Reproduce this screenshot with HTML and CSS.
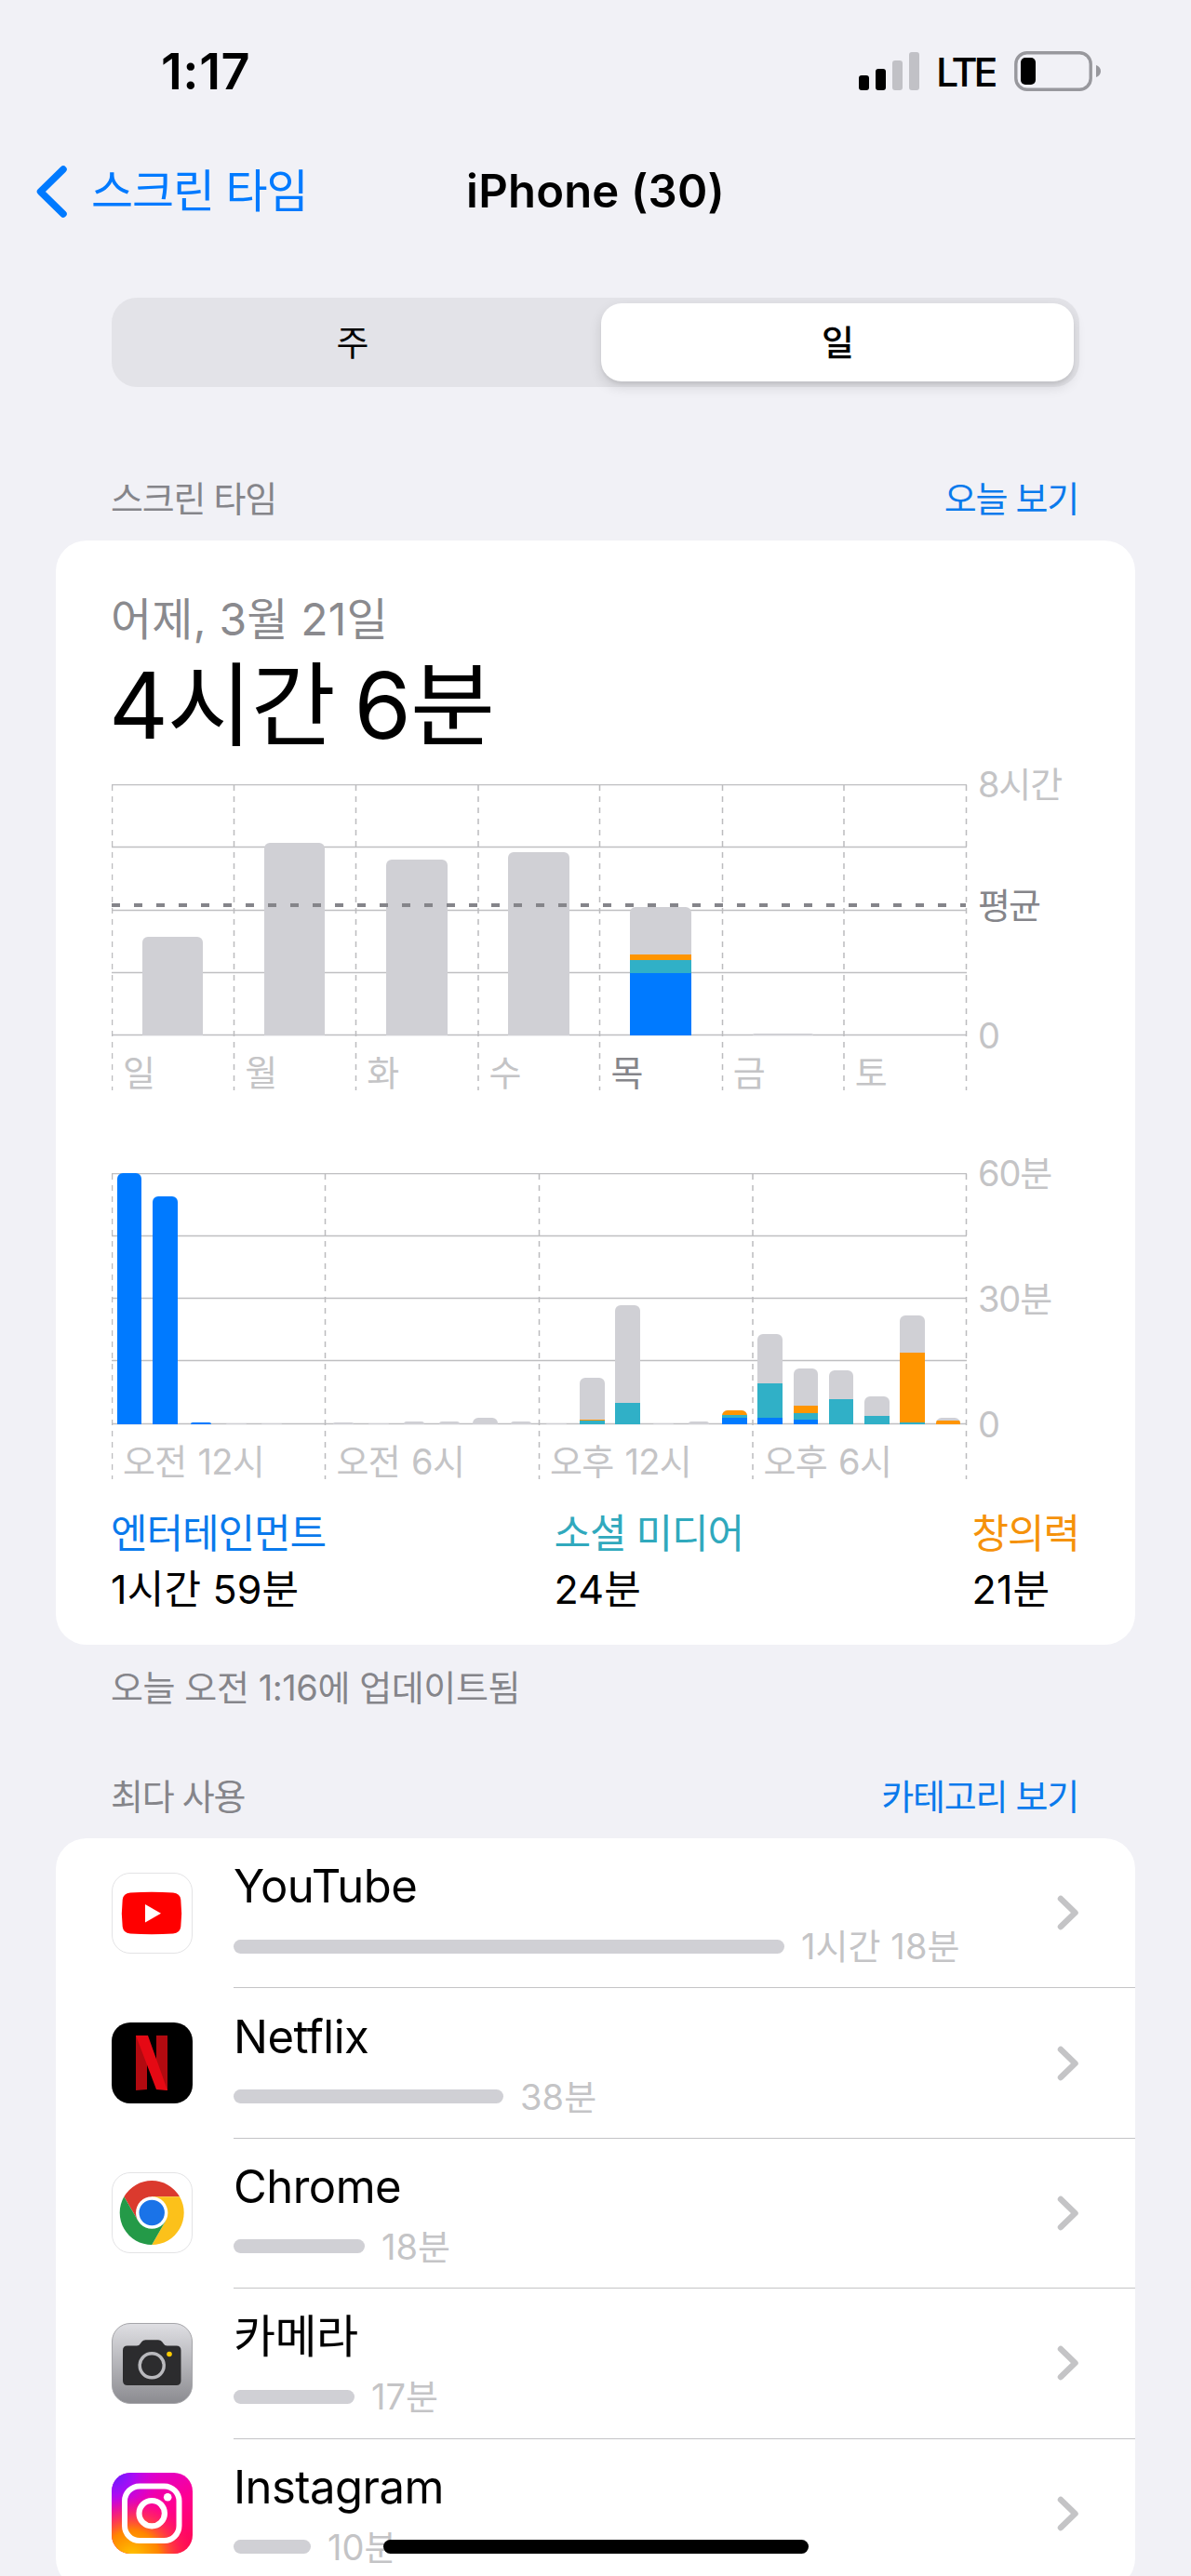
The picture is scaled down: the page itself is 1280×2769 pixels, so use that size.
FILE: index.html
```html
<!DOCTYPE html>
<html lang="ko">
<head>
  <meta charset="UTF-8">
  <meta name="viewport" content="width=device-width, initial-scale=1.0">
  <title>스크린 타임</title>
  <link rel="stylesheet" href="styles.css">
</head>
<body>

  <!-- Status bar -->
  <div class="status-bar">
    <span class="clock">1:17</span>
    <div class="status-icons">
      <svg class="signal" width="65" height="42" viewBox="0 0 65 42">
        <rect x="0" y="25" width="11" height="16" rx="3" fill="#000"/>
        <rect x="18" y="18" width="11" height="23" rx="3" fill="#000"/>
        <rect x="36" y="9" width="11" height="32" rx="3" fill="#c1c1c6"/>
        <rect x="54" y="0" width="11" height="41" rx="3" fill="#c1c1c6"/>
      </svg>
      <span class="network">LTE</span>
      <svg class="battery" width="94" height="44" viewBox="0 0 94 44">
        <rect x="1.8" y="1.8" width="80.4" height="39.4" rx="12" fill="none" stroke="#98989d" stroke-width="3.4"/>
        <rect x="7" y="7" width="16" height="29" rx="5" fill="#000"/>
        <path d="M88 15c3 1 5 3.500 5 6.500s-2 5.500-5 6.500z" fill="#98989d"/>
      </svg>
    </div>
  </div>

  <!-- Navigation -->
  <div class="nav">
    <a class="back">
      <svg width="35" height="58" viewBox="0 0 35 58">
        <path d="M30 5L5.500 29L30 53" fill="none" stroke="#007aff" stroke-width="7.500" stroke-linecap="round" stroke-linejoin="round"/>
      </svg>
      <span>스크린 타임</span>
    </a>
    <h1 class="nav-title">iPhone (30)</h1>
  </div>

  <div class="segmented">
    <div class="segment">주</div>
    <div class="segment active">일</div>
  </div>

  <!-- Screen time summary -->
  <div class="section-head first">
    <span>스크린 타임</span>
    <a>오늘 보기</a>
  </div>

  <div class="card summary">
    <div class="date">어제, 3월 21일</div>
    <div class="total">4시간 6분</div>

    <div class="chart week">
      <div class="plot">
        <svg class="grid" width="920" height="330" viewBox="0 0 920 330">
          <path class="h-line" d="M0 .5H919M0 67.500H919M0 135.500H919M0 202.500H919M0 269.500H919"/>
          <path class="v-line" d="M.5 1V329M131.500 1V329M262.500 1V329M394 1V329M524.500 1V329M656.500 1V329M787 1V329M918.500 1V329"/>
        </svg>
        <div class="bars">
          <div class="slot"><div class="bar" style="height: 106px"></div></div>
          <div class="slot"><div class="bar" style="height: 207px"></div></div>
          <div class="slot"><div class="bar" style="height: 189px"></div></div>
          <div class="slot"><div class="bar" style="height: 197px"></div></div>
          <div class="slot">
            <div class="bar" style="height: 138px">
              <i class="creative" style="height: 6px"></i>
              <i class="social" style="height: 14px"></i>
              <i class="fun" style="height: 67px"></i>
            </div>
          </div>
          <div class="slot"><div class="bar" style="height: 2px"></div></div>
          <div class="slot"></div>
        </div>
        <svg class="average" width="918" height="4" viewBox="0 0 918 4">
          <path d="M0 2H918"/>
        </svg>
        <div class="x-labels">
          <span>일</span><span>월</span><span>화</span><span>수</span><span class="current">목</span><span>금</span><span>토</span>
        </div>
      </div>
      <div class="y-labels">
        <span>8시간</span>
        <span class="average-label">평균</span>
        <span>0</span>
      </div>
    </div>

    <div class="chart day">
      <div class="plot">
        <svg class="grid" width="920" height="330" viewBox="0 0 920 330">
          <path class="h-line" d="M0 .5H919M0 67.500H919M0 134.500H919M0 201.500H919M0 269.500H919"/>
          <path class="v-line" d="M.5 1V329M229.500 1V329M459.500 1V329M689 1V329M918.500 1V329"/>
        </svg>
        <div class="bars">
          <div class="slot"><div class="bar" style="height: 270px"><i class="fun" style="height: 270px"></i></div></div>
          <div class="slot"><div class="bar" style="height: 245px"><i class="fun" style="height: 245px"></i></div></div>
          <div class="slot"><div class="bar tiny" style="height: 2px"><i class="fun" style="height: 2px"></i></div></div>
          <div class="slot"><div class="bar tiny" style="height: 1px"></div></div>
          <div class="slot"><div class="bar tiny" style="height: 1px"></div></div>
          <div class="slot"></div>
          <div class="slot"><div class="bar tiny" style="height: 2px"></div></div>
          <div class="slot"><div class="bar tiny" style="height: 1px"></div></div>
          <div class="slot"><div class="bar tiny" style="height: 3px"></div></div>
          <div class="slot"><div class="bar tiny" style="height: 3px"></div></div>
          <div class="slot"><div class="bar" style="height: 7px"></div></div>
          <div class="slot"><div class="bar tiny" style="height: 3px"></div></div>
          <div class="slot"><div class="bar tiny" style="height: 1px"></div></div>
          <div class="slot"><div class="bar" style="height: 50px"><i class="creative" style="height: 1px"></i><i class="social" style="height: 4px"></i></div></div>
          <div class="slot"><div class="bar" style="height: 128px"><i class="social" style="height: 23px"></i></div></div>
          <div class="slot"><div class="bar tiny" style="height: 1px"></div></div>
          <div class="slot"><div class="bar tiny" style="height: 3px"></div></div>
          <div class="slot"><div class="bar" style="height: 15px"><i class="creative" style="height: 5px"></i><i class="social" style="height: 3px"></i><i class="fun" style="height: 7px"></i></div></div>
          <div class="slot"><div class="bar" style="height: 97px"><i class="social" style="height: 37px"></i><i class="fun" style="height: 7px"></i></div></div>
          <div class="slot"><div class="bar" style="height: 60px"><i class="creative" style="height: 8px"></i><i class="social" style="height: 7px"></i><i class="fun" style="height: 5px"></i></div></div>
          <div class="slot"><div class="bar" style="height: 58px"><i class="social" style="height: 27px"></i></div></div>
          <div class="slot"><div class="bar" style="height: 30px"><i class="social" style="height: 9px"></i></div></div>
          <div class="slot"><div class="bar" style="height: 117px"><i class="creative" style="height: 75px"></i><i class="social" style="height: 2px"></i></div></div>
          <div class="slot"><div class="bar" style="height: 7px"><i class="creative" style="height: 4px"></i></div></div>
        </div>
        <div class="x-labels">
          <span>오전 12시</span><span>오전 6시</span><span>오후 12시</span><span>오후 6시</span>
        </div>
      </div>
      <div class="y-labels">
        <span>60분</span>
        <span>30분</span>
        <span>0</span>
      </div>
    </div>

    <div class="legend">
      <div class="legend-item">
        <div class="fun-text">엔터테인먼트</div>
        <div class="legend-value">1시간 59분</div>
      </div>
      <div class="legend-item">
        <div class="social-text">소셜 미디어</div>
        <div class="legend-value">24분</div>
      </div>
      <div class="legend-item">
        <div class="creative-text">창의력</div>
        <div class="legend-value">21분</div>
      </div>
    </div>
  </div>

  <div class="updated">오늘 오전 1:16에 업데이트됨</div>

  <!-- Most used apps -->
  <div class="section-head">
    <span>최다 사용</span>
    <a>카테고리 보기</a>
  </div>

  <div class="card apps">
    <div class="app">
      <svg class="app-icon" viewBox="0 0 87 87">
        <rect x=".5" y=".5" width="86" height="86" rx="19.500" fill="#fff" stroke="#e3e3e5"/>
        <path d="M20 21.500Q43 20 66 21.500Q73.500 22 74.300 29Q76 43.500 74.300 58Q73.500 65 66 65.500Q43 67 20 65.500Q12.500 65 11.700 58Q10 43.500 11.700 29Q12.500 22 20 21.500Z" fill="#f00"/>
        <path d="M36 34L53 43.700L36 53.500Z" fill="#fff"/>
      </svg>
      <div class="app-body">
        <div class="app-info">
          <div class="app-name">YouTube</div>
          <div class="usage"><div class="usage-bar" style="width: 592px"></div>1시간 18분</div>
        </div>
        <svg class="chevron" width="24" height="38" viewBox="0 0 24 38"><path d="M4 4L19.500 19L4 34"/></svg>
      </div>
    </div>

    <div class="app">
      <svg class="app-icon" viewBox="0 0 87 87">
        <rect width="87" height="87" rx="20" fill="#000"/>
        <path d="M26 14H38V72L26 73Z" fill="#b20a10"/>
        <path d="M48 14H60V73L48 72Z" fill="#b20a10"/>
        <path d="M26 14H39L60 73Q54 72 48 72Z" fill="#e50914"/>
      </svg>
      <div class="app-body">
        <div class="app-info">
          <div class="app-name">Netflix</div>
          <div class="usage"><div class="usage-bar" style="width: 290px"></div>38분</div>
        </div>
        <svg class="chevron" width="24" height="38" viewBox="0 0 24 38"><path d="M4 4L19.500 19L4 34"/></svg>
      </div>
    </div>

    <div class="app">
      <svg class="app-icon" viewBox="0 0 87 87">
        <rect x=".5" y=".5" width="86" height="86" rx="19.500" fill="#fff" stroke="#e3e3e5"/>
        <g transform="translate(43.200 43.500)">
          <path d="M-29.900 -17.200A34.500 34.500 0 0 1 29.900 -17.200H0L-14.900 8.600Z" fill="#db3a2e"/>
          <path d="M29.900 -17.200A34.500 34.500 0 0 1 0 34.500L14.900 8.600L0 -17.200Z" fill="#fcc11a"/>
          <path d="M0 34.500A34.500 34.500 0 0 1 -29.900 -17.200L-14.900 8.600H14.900Z" fill="#249a48"/>
          <circle r="17.200" fill="#fff"/>
          <circle r="13.700" fill="#1a73e8"/>
        </g>
      </svg>
      <div class="app-body">
        <div class="app-info">
          <div class="app-name">Chrome</div>
          <div class="usage"><div class="usage-bar" style="width: 141px"></div>18분</div>
        </div>
        <svg class="chevron" width="24" height="38" viewBox="0 0 24 38"><path d="M4 4L19.500 19L4 34"/></svg>
      </div>
    </div>

    <div class="app">
      <svg class="app-icon" viewBox="0 0 87 87">
        <defs>
          <linearGradient id="camera-bg" x1="0" y1="0" x2="0" y2="1">
            <stop offset="0" stop-color="#dfdfe3"/>
            <stop offset="1" stop-color="#8b8b90"/>
          </linearGradient>
        </defs>
        <rect x=".5" y=".5" width="86" height="86" rx="19.500" fill="url(#camera-bg)" stroke="#a5a5a9"/>
        <path d="M17 24.500H27Q29.500 24.500 31 22L32.500 20Q34 18.300 36.500 18.300H50Q52.500 18.300 54 20L55.500 22Q57 24.500 59.500 24.500H69.500Q74.500 24.500 74.500 29.500V62Q74.500 67 69.500 67H17Q12 67 12 62V29.500Q12 24.500 17 24.500Z" fill="#2c2c2e"/>
        <circle cx="43.200" cy="45.700" r="13" fill="#2c2c2e" stroke="#b9b9bd" stroke-width="3.500"/>
        <circle cx="62" cy="33.500" r="2.800" fill="#fc0"/>
      </svg>
      <div class="app-body">
        <div class="app-info">
          <div class="app-name">카메라</div>
          <div class="usage"><div class="usage-bar" style="width: 130px"></div>17분</div>
        </div>
        <svg class="chevron" width="24" height="38" viewBox="0 0 24 38"><path d="M4 4L19.500 19L4 34"/></svg>
      </div>
    </div>

    <div class="app">
      <svg class="app-icon" viewBox="0 0 87 87">
        <defs>
          <linearGradient id="insta-pink" x1=".3" y1="0" x2=".8" y2="1">
            <stop offset="0" stop-color="#d800d8"/>
            <stop offset=".5" stop-color="#ff0090"/>
            <stop offset="1" stop-color="#ff0a50"/>
          </linearGradient>
          <radialGradient id="insta-purple" cx="0" cy="0" r=".6">
            <stop offset="0" stop-color="#5a20ff"/>
            <stop offset=".45" stop-color="#9a10ff" stop-opacity=".8"/>
            <stop offset="1" stop-color="#d800d8" stop-opacity="0"/>
          </radialGradient>
          <radialGradient id="insta-yellow" cx=".25" cy="1.050" r=".75">
            <stop offset="0" stop-color="#ffc800"/>
            <stop offset=".45" stop-color="#ff8500"/>
            <stop offset="1" stop-color="#ff2060" stop-opacity="0"/>
          </radialGradient>
        </defs>
        <rect width="87" height="87" rx="20" fill="url(#insta-pink)"/>
        <rect width="87" height="87" rx="20" fill="url(#insta-purple)"/>
        <rect width="87" height="87" rx="20" fill="url(#insta-yellow)"/>
        <rect x="14" y="14.500" width="58.500" height="58.500" rx="16" fill="none" stroke="#fff" stroke-width="6"/>
        <circle cx="43.200" cy="43.700" r="13.700" fill="none" stroke="#fff" stroke-width="6.200"/>
        <circle cx="60.200" cy="26.200" r="4.300" fill="#fff"/>
      </svg>
      <div class="app-body">
        <div class="app-info">
          <div class="app-name">Instagram</div>
          <div class="usage"><div class="usage-bar" style="width: 83px"></div>10분</div>
        </div>
        <svg class="chevron" width="24" height="38" viewBox="0 0 24 38"><path d="M4 4L19.500 19L4 34"/></svg>
      </div>
    </div>
  </div>

  <div class="home-indicator"></div>

</body>
</html>
```

FILE: styles.css
```css
/* General styles for the page */
* {
  box-sizing: border-box;
}

body {
  position: relative;
  margin: 0;
  width: 1280px;
  height: 2769px;
  overflow: hidden;
  background-color: #f1f1f6;
  color: #000;
  font-family: Inter, "Noto Sans CJK KR", sans-serif;
  font-size: 38px;
  line-height: 50px;
  letter-spacing: -0.03em;
  white-space: nowrap;
}

svg {
  display: block;
  flex-shrink: 0;
}

/* Status bar */
.status-bar {
  display: flex;
  justify-content: space-between;
  align-items: center;
  height: 154px;
  padding: 0 96px 0 173px;
}

.clock {
  font-size: 54px;
  font-weight: 600;
  letter-spacing: 0.01em;
}

.status-icons {
  display: flex;
  align-items: center;
}

.network {
  width: 64px;
  margin: 0 20px 0 18px;
  font-size: 43px;
  font-weight: 500;
  letter-spacing: -0.09em;
}

/* Navigation */
.nav {
  display: grid;
  grid-template-columns: 1fr auto 1fr;
  align-items: center;
  height: 104px;
  padding: 0 38px;
}

.back {
  display: flex;
  align-items: center;
  gap: 25px;
  color: #007aff;
  font-size: 49px;
}

.nav-title {
  margin: 0;
  font-size: 49px;
  font-weight: 600;
  letter-spacing: 0.004em;
}

/* Week / day switch */
.segmented {
  display: flex;
  width: 1040px;
  height: 96px;
  margin: 62px auto 0;
  padding: 6px;
  border-radius: 27px;
  background-color: #e3e3e8;
}

.segment {
  flex: 1;
  display: flex;
  align-items: center;
  justify-content: center;
  padding-right: 15px;
  border-radius: 22px;
}

.segment.active {
  flex: 0 0 508px;
  padding-right: 0;
  background-color: #fff;
  box-shadow: 0 6px 14px rgba(0, 0, 0, 0.12), 0 3px 3px rgba(0, 0, 0, 0.05);
  font-weight: 500;
}

/* Section headings */
.section-head {
  display: flex;
  justify-content: space-between;
  height: 50px;
  margin: 67px 121px 20px 119px;
  color: #85858a;
  letter-spacing: -0.033em;
}

.section-head.first {
  margin-top: 95px;
}

.section-head a {
  color: #0a7aec;
}

.card {
  width: 1160px;
  margin: 0 auto;
  border-radius: 33px;
  background-color: #fff;
}

.summary {
  height: 1187px;
  padding: 55px 60px 0;
}

.date {
  margin-left: -1px;
  font-size: 48px;
  line-height: 60px;
  letter-spacing: 0.004em;
  color: #8a8a8e;
}

.total {
  margin: 7px 0 30px -3px;
  font-size: 99px;
  line-height: 110px;
  letter-spacing: -0.011em;
  word-spacing: -6px;
}

/* Charts */
.chart {
  display: flex;
  gap: 13px;
  height: 329px;
  color: #c4c4c6;
}

.plot {
  position: relative;
  width: 918px;
}

.grid {
  position: absolute;
  top: 0;
  left: 0;
}

.h-line {
  stroke: #bfbfc1;
  stroke-width: 1.5;
}

.v-line {
  stroke: #bcbcbe;
  stroke-width: 1.5;
  stroke-dasharray: 6 6;
}

.bars {
  position: relative;
  display: flex;
  height: 270px;
}

.slot {
  flex: 1;
  display: flex;
  justify-content: center;
  align-items: flex-end;
}

.bar {
  display: flex;
  flex-direction: column;
  justify-content: flex-end;
  overflow: hidden;
  width: 65.5px;
  border-radius: 6px 6px 0 0;
  background-color: #d0d0d5;
}

.day .bar {
  width: 26.5px;
}

.day .bar.tiny {
  width: 22px;
}

.bar i {
  flex-shrink: 0;
}

.fun {
  background-color: #007aff;
}

.social {
  background-color: #30b0c7;
}

.creative {
  background-color: #ff9500;
}

.average {
  position: absolute;
  top: 128px;
  left: 0;
}

.average path {
  stroke: #85858a;
  stroke-width: 4;
  stroke-dasharray: 9 15;
}

.x-labels {
  display: flex;
  padding-top: 15px;
}

.x-labels span {
  flex: 1 1 0;
  padding-left: 12px;
}

.day .x-labels {
  letter-spacing: -0.018em;
  word-spacing: 2px;
}

.current,
.average-label {
  color: #85858a;
}

.y-labels {
  display: flex;
  flex-direction: column;
  justify-content: space-between;
  height: 320px;
  margin-top: -25px;
}

.average-label {
  margin-bottom: 10px;
  letter-spacing: -0.05em;
}

.day {
  margin-top: 89px;
}

/* Category totals */
.legend {
  display: flex;
  justify-content: space-between;
  margin: 28px 0 0 -1px;
  font-size: 43px;
  line-height: 60px;
  letter-spacing: -0.025em;
}

.legend-value {
  letter-spacing: 0.004em;
}

.fun-text {
  color: #0a7aec;
}

.social-text {
  color: #30a9bd;
}

.creative-text {
  color: #f5920b;
}

.updated {
  margin: 21px 119px 0;
  color: #85858a;
  letter-spacing: -0.011em;
}

/* App list */
.app {
  display: flex;
  align-items: center;
  height: 161.4px;
  padding-left: 60px;
}

.app-icon {
  width: 87px;
  height: 87px;
  margin: -1px 44px 0 0;
}

.app-body {
  flex: 1;
  display: flex;
  align-items: center;
  justify-content: space-between;
  height: 100%;
  padding-right: 60px;
  border-bottom: 1.5px solid #c4c4c6;
}

.app-info {
  padding-top: 3px;
}

.app-name {
  height: 60px;
  font-size: 49px;
  line-height: 60px;
  letter-spacing: -0.011em;
}

.usage {
  display: flex;
  align-items: center;
  gap: 18px;
  margin-top: 9px;
  color: #c4c4c6;
  letter-spacing: 0.002em;
}

.usage-bar {
  height: 15px;
  border-radius: 8px;
  background-color: #d0d0d5;
}

.chevron path {
  fill: none;
  stroke: #c4c4c6;
  stroke-width: 6.5;
  stroke-linecap: round;
  stroke-linejoin: round;
}

.home-indicator {
  position: absolute;
  left: 412px;
  top: 2730px;
  width: 457px;
  height: 15px;
  border-radius: 8px;
  background-color: #000;
}
```
